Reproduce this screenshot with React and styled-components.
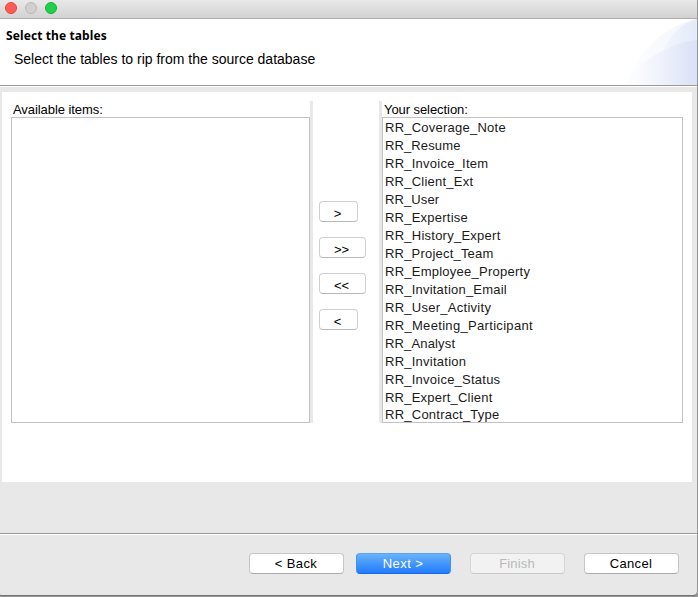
import React from "react";
import styled, { createGlobalStyle, css } from "styled-components";

const GlobalStyle = createGlobalStyle`
  * { box-sizing: border-box; }
  body {
    margin: 0;
    overflow: hidden;
    background: #8e8e8e;
    font: 13px/18px "Liberation Sans", Arial, sans-serif;
    color: #000;
  }
`;

const Desktop = styled.div`
  width: 698px;
  height: 597px;
  background: #999;
`;

const Window = styled.main`
  display: flex;
  flex-direction: column;
  width: 697px;
  height: 595px;
  background: #e8e8e8;
  border-radius: 0 0 4px 1px;
  box-shadow: 0 1px 1px #707070;
  overflow: hidden;
`;

const TitleBar = styled.div`
  flex: none;
  display: flex;
  gap: 8px;
  height: 19px;
  padding: 2px 5px 0;
  background: linear-gradient(#e9e9e9, #d2d2d2);
  border-bottom: 1px solid #acacac;
`;

const Light = styled.span`
  width: 12px;
  height: 12px;
  border-radius: 50%;
  background: ${(p) => p.$fill};
  border: 1px solid ${(p) => p.$edge};
`;

const Header = styled.header`
  flex: none;
  display: flex;
  justify-content: space-between;
  height: 66px;
  background: #fff;
`;

const Headings = styled.div`
  padding: 8px 0 0 6px;
  white-space: nowrap;
`;

const Title = styled.h1`
  margin: 0;
  font: bold 12px/18px "Noto Sans", "Open Sans", sans-serif;
  letter-spacing: 0.1px;
`;

const Subtitle = styled.p`
  margin: 5px 0 0 8px;
  font-size: 14px;
`;

const Rule = styled.div`
  flex: none;
  height: 2px;
  background: #fff;
  border-top: 1px solid #999;
`;

const Panel = styled.section`
  flex: none;
  display: flex;
  width: 690px;
  height: 390px;
  margin: 5px 0 0 2px;
  padding: 9px 9px 59px;
  background: #fff;
`;

const Column = styled.div`
  display: flex;
  flex-direction: column;
  width: ${(p) => p.$width}px;
`;

const Divider = styled.div`
  width: ${(p) => p.$width}px;
  height: 322px;
  background: #e8e8e8;
`;

const Label = styled.div`
  height: 16px;
  padding-left: 2px;
  line-height: 17px;
  white-space: nowrap;
  letter-spacing: -0.07px;
`;

const ListBox = styled.ul`
  flex: 1;
  margin: 0;
  padding: 1px 2px 0;
  border: 1px solid #c2c2c2;
  list-style: none;
  overflow: hidden;
`;

const Item = styled.li`
  height: 18px;
  color: #1a1a1a;
  white-space: nowrap;
  letter-spacing: ${(p) => p.$spacing}px;
  &:last-child { line-height: 16px; }
`;

const Movers = styled.div`
  display: flex;
  flex-direction: column;
  align-items: flex-start;
  gap: 15px;
  width: 66px;
  padding: 100px 0 0 6px;
`;

const Button = styled.button`
  height: 21px;
  padding: 0;
  font: inherit;
  line-height: 18px;
  color: #000;
  background: #fff;
  border: 1px solid #c6c6c6;
  border-bottom-color: #acacac;
  border-radius: 4px;
`;

const MoveButton = styled(Button)`
  width: ${(p) => (p.$wide ? 47 : 39)}px;
  padding: 5px 2px 0 0;
  border-color: #cfcfcf;
  border-bottom-color: #b8b8b8;
  line-height: 14px;
`;

const ActionButton = styled(Button)`
  width: 95px;
  letter-spacing: ${(p) => p.$spacing}px;
  padding: 1px 1px 0 0;
  ${(p) => p.$primary && css`
    color: #fff;
    background: linear-gradient(#6bb2fa, #4297fb 50%, #247bff);
    border-color: #5ba3f5 #3f8ff4 #1768f0;
  `}
  &:disabled {
    color: #b9b9b9;
    background: #f2f2f2;
    border-color: #d6d6d6 #d6d6d6 #c9c9c9;
  }
`;

const Footer = styled.footer`
  display: flex;
  padding: 18px 0 0 249px;
`;

const Gap = styled.span`
  width: ${(p) => p.$width}px;
`;

const Spacer = styled.div`
  flex: none;
  height: 51px;
`;

const tables = [
  ["RR_Coverage_Note", 0.24],
  ["RR_Resume", 0.12],
  ["RR_Invoice_Item", 0.24],
  ["RR_Client_Ext", 0.23],
  ["RR_User", 0.12],
  ["RR_Expertise", 0.23],
  ["RR_History_Expert", 0.25],
  ["RR_Project_Team", 0.2],
  ["RR_Employee_Property", 0.25],
  ["RR_Invitation_Email", 0.22],
  ["RR_User_Activity", 0.27],
  ["RR_Meeting_Participant", 0.32],
  ["RR_Analyst", 0.15],
  ["RR_Invitation", 0.25],
  ["RR_Invoice_Status", 0.24],
  ["RR_Expert_Client", 0.22],
  ["RR_Contract_Type", 0.25],
];

function BannerArt() {
  return (
    <svg width="74" height="66" viewBox="0 0 74 66" aria-hidden="true">
      <defs>
        <linearGradient id="outer" x1="0" x2="1">
          <stop offset="0" stopColor="#fff" />
          <stop offset="1" stopColor="#f0f4fc" />
        </linearGradient>
        <linearGradient id="upper" x1="0" x2="1">
          <stop offset="0" stopColor="#f5f8fd" />
          <stop offset="1" stopColor="#e3eaf8" />
        </linearGradient>
        <linearGradient id="lower" x1="0" x2="1">
          <stop offset="0" stopColor="#fff" />
          <stop offset="0.2" stopColor="#fafbfe" />
          <stop offset="0.55" stopColor="#edf1fb" />
          <stop offset="0.9" stopColor="#dee4f6" />
          <stop offset="1" stopColor="#dce3f7" />
        </linearGradient>
      </defs>
      <path d="M2 66C14 34 40 7 74 0V66Z" fill="url(#outer)" />
      <path d="M34 44C44 20 56 5 74 0V44Z" fill="url(#upper)" />
      <path d="M0 66C18 41 46 24 74 21V66Z" fill="url(#lower)" />
    </svg>
  );
}

export default function App() {
  return (
    <Desktop>
      <GlobalStyle />
      <Window>
        <TitleBar>
          <Light $fill="#ff5b56" $edge="#e2463f" />
          <Light $fill="#d0d0d0" $edge="#b9b9b9" />
          <Light $fill="#20cf4b" $edge="#16b13a" />
        </TitleBar>
        <Header>
          <Headings>
            <Title>Select the tables</Title>
            <Subtitle>Select the tables to rip from the source database</Subtitle>
          </Headings>
          <BannerArt />
        </Header>
        <Rule />
        <Panel>
          <Column $width={299}>
            <Label>Available items:</Label>
            <ListBox />
          </Column>
          <Divider $width={3} />
          <Movers>
            <MoveButton>&gt;</MoveButton>
            <MoveButton $wide>&gt;&gt;</MoveButton>
            <MoveButton $wide>&lt;&lt;</MoveButton>
            <MoveButton>&lt;</MoveButton>
          </Movers>
          <Divider $width={3} />
          <Column $width={301}>
            <Label>Your selection:</Label>
            <ListBox>
              {tables.map(([name, spacing]) => (
                <Item key={name} $spacing={spacing}>{name}</Item>
              ))}
            </ListBox>
          </Column>
        </Panel>
        <Spacer />
        <Rule />
        <Footer>
          <ActionButton $spacing={0.4}>&lt; Back</ActionButton>
          <Gap $width={12} />
          <ActionButton $primary $spacing={0.4}>Next &gt;</ActionButton>
          <Gap $width={19} />
          <ActionButton disabled $spacing={0.15}>Finish</ActionButton>
          <Gap $width={19} />
          <ActionButton $spacing={0.3}>Cancel</ActionButton>
        </Footer>
      </Window>
    </Desktop>
  );
}
